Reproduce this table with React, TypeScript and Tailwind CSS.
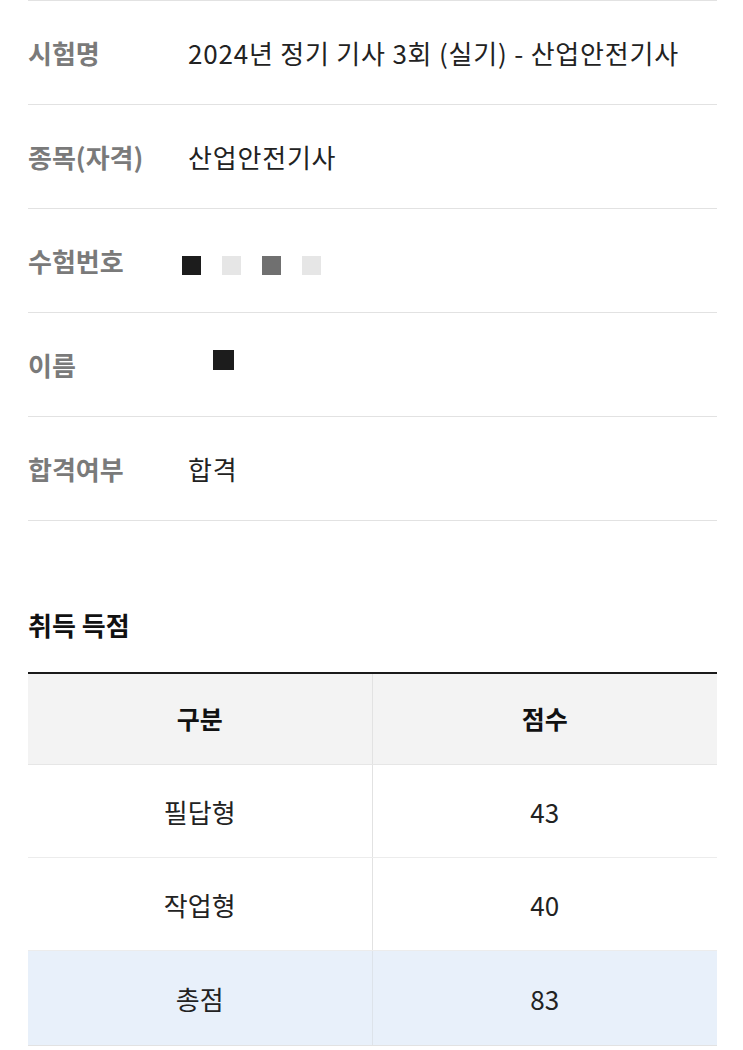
import React from 'react';

interface InfoRow {
  label: string;
  value: React.ReactNode;
}

const Block = ({ color }: { color: string }) => (
  <span className={`inline-block w-[19px] h-[19px] ${color}`} />
);

const rows: InfoRow[] = [
  { label: '시험명', value: '2024년 정기 기사 3회 (실기) - 산업안전기사' },
  { label: '종목(자격)', value: '산업안전기사' },
  {
    label: '수험번호',
    value: (
      <span className="flex items-center gap-[21px] -ml-[6px] mt-[10px]">
        <Block color="bg-[#1c1c1c]" />
        <Block color="bg-[#e6e6e6]" />
        <Block color="bg-[#707070]" />
        <Block color="bg-[#e6e6e6]" />
      </span>
    ),
  },
  {
    label: '이름',
    value: (
      <span className="flex items-center ml-[25px] -mt-[9px]">
        <span className="inline-block w-[21px] h-[20px] bg-[#1c1c1c]" />
      </span>
    ),
  },
  { label: '합격여부', value: '합격' },
];

const scores = [
  { name: '필답형', score: 43 },
  { name: '작업형', score: 40 },
];

const App: React.FC = () => {
  return (
    <div
      className="w-[743px] min-h-[1050px] bg-white pl-[28px] pr-[26px] text-[#222]"
      style={{ fontFamily: '"Noto Sans CJK KR", "Noto Sans", sans-serif' }}
    >
      <div className="border-t border-[#e2e2e2]">
        {rows.map((row) => (
          <div
            key={row.label}
            className="flex items-center h-[104px] border-b border-[#e2e2e2]"
          >
            <div className="w-[160px] shrink-0 text-[26px] font-bold text-[#7a7a7a]">
              {row.label}
            </div>
            <div className="text-[26px] tracking-[0.8px]">{row.value}</div>
          </div>
        ))}
      </div>

      <h2 className="mt-[84px] text-[26px] font-bold text-[#111]">취득 득점</h2>

      <div className="mt-[28px] border-t-2 border-[#1a1a1a]">
        <div className="grid grid-cols-2 h-[91px] bg-[#f3f3f3] border-b border-[#e6e6e6] text-[25px] font-bold text-[#111]">
          <div className="flex items-center justify-center border-r border-[#e2e2e2]">구분</div>
          <div className="flex items-center justify-center">점수</div>
        </div>
        {scores.map((s) => (
          <div key={s.name} className="grid grid-cols-2 h-[93px] border-b border-[#ececec] text-[26px]">
            <div className="flex items-center justify-center border-r border-[#e2e2e2]">{s.name}</div>
            <div className="flex items-center justify-center">{s.score}</div>
          </div>
        ))}
        <div className="grid grid-cols-2 h-[95px] bg-[#e8f0fa] border-b border-[#e2e2e2] text-[26px]">
          <div className="flex items-center justify-center border-r border-[#dde3ea]">총점</div>
          <div className="flex items-center justify-center">83</div>
        </div>
      </div>
    </div>
  );
};

export default App;
